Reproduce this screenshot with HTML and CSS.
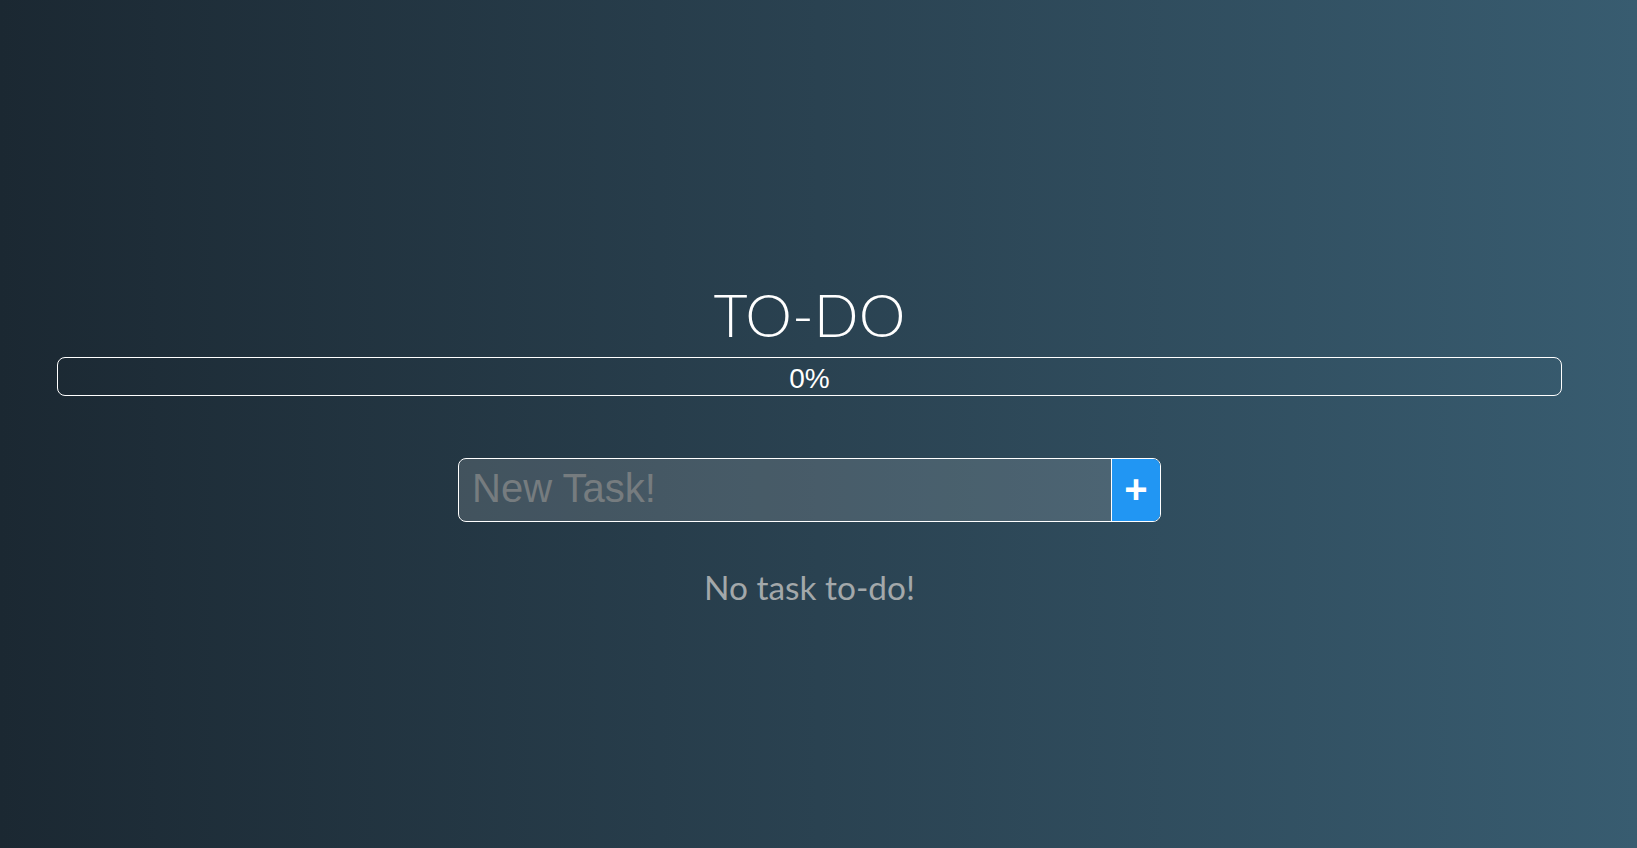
FILE: index.html
```html
<!DOCTYPE html>
<html lang="en">
<head>
<meta charset="utf-8">
<title>TO-DO</title>
<link rel="stylesheet" href="styles.css">
</head>
<body>
<main class="app">
  <h1 class="title">TO-DO</h1>
  <div class="progress"><span class="progress-label">0%</span></div>
  <form class="new-task">
    <input class="new-task-input" type="text" placeholder="New Task!">
    <button class="new-task-btn" type="button">+</button>
  </form>
  <p class="empty">No task to-do!</p>
</main>
</body>
</html>
```

FILE: styles.css
```css
html, body {
  margin: 0;
  padding: 0;
  height: 100%;
}
body {
  background: linear-gradient(to right, #1b2832 0%, #2a4251 50%, #385c70 100%);
  font-family: "Liberation Sans", Arial, sans-serif;
  color: #fff;
}
.app {
  padding: 279px 75px 0 57px;
  display: flex;
  flex-direction: column;
  align-items: center;
}
.title {
  margin: 0;
  font-family: Lato, sans-serif;
  font-weight: 300;
  font-size: 59px;
  line-height: 72px;
  color: #fff;
}
.progress {
  box-sizing: border-box;
  align-self: stretch;
  margin-top: 6px;
  height: 39px;
  border: 1px solid #fff;
  border-radius: 8px;
  padding-top: 3px;
  text-align: center;
}
.progress-label {
  font-size: 28px;
  line-height: 35px;
  color: #fff;
}
.new-task {
  display: flex;
  margin-top: 62px;
  width: 703px;
  height: 64px;
  box-sizing: border-box;
  border: 1px solid #fff;
  border-radius: 8px;
  overflow: hidden;
  align-self: flex-start;
  margin-left: 401px;
}
.new-task-input {
  flex: 1;
  min-width: 0;
  box-sizing: border-box;
  margin: 0;
  border: 0;
  border-right: 1px solid #fff;
  background: rgba(255, 255, 255, 0.14);
  font-family: "Liberation Sans", Arial, sans-serif;
  font-size: 40px;
  color: #fff;
  padding: 0 12px 3px 13px;
  outline: none;
}
.new-task-input::placeholder {
  color: #767c7f;
}
.new-task-btn {
  width: 48px;
  border: 0;
  margin: 0;
  padding: 0 0 3px;
  background: #2196f3;
  color: #fff;
  font-family: "Liberation Sans", Arial, sans-serif;
  font-weight: 700;
  font-size: 40px;
  line-height: 1;
  cursor: pointer;
}
.empty {
  margin: 46px 0 0;
  font-family: Lato, sans-serif;
  font-size: 33.4px;
  line-height: 38px;
  color: #a3a8aa;
}
```
